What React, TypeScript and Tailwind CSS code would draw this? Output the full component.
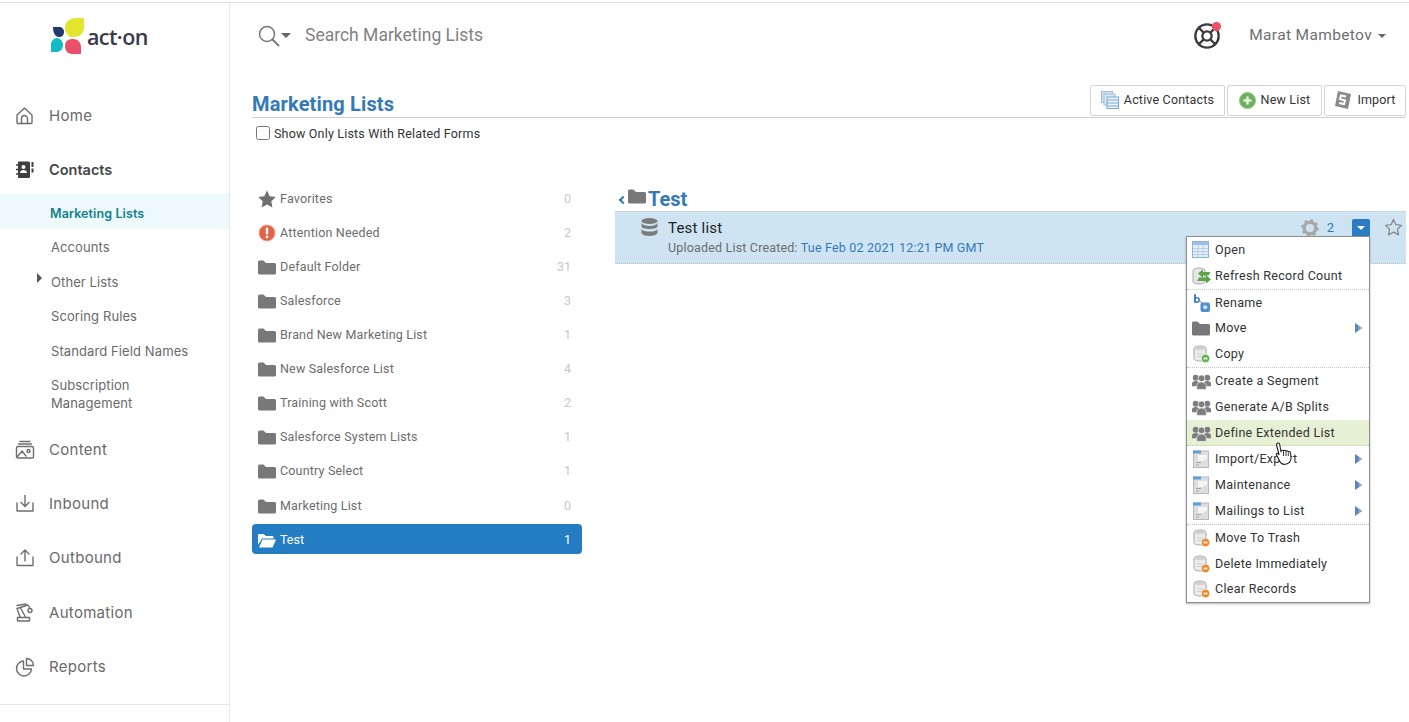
import React from "react";
import { LifeBuoy } from "lucide-react";

const S = (p: { children: React.ReactNode; w?: number; h?: number; vb?: string; className?: string }) => (
  <svg width={p.w ?? 20} height={p.h ?? 20} viewBox={p.vb ?? "0 0 20 20"} className={p.className ?? "shrink-0"} fill="none">
    {p.children}
  </svg>
);
const st = { stroke: "#6e6e6e", strokeWidth: 1.4, strokeLinecap: "round" as const, strokeLinejoin: "round" as const };

const Home = () => (
  <S><path {...st} d="M2 9 9.5 2 17 9v7.5a1 1 0 0 1-1 1H3a1 1 0 0 1-1-1Z" /><path {...st} d="M6.5 17.5v-5a3 3 0 0 1 6 0v5" /></S>
);
const ContactsI = () => (
  <S>
    <path fill="#3f3f3f" d="M3 1.5h10.5a1.5 1.5 0 0 1 1.5 1.5v13.5a1.5 1.5 0 0 1-1.5 1.5H3Z" />
    <path stroke="#3f3f3f" strokeWidth="1.6" d="M1 5h3M1 9.5h3M1 14h3" />
    <path fill="#3f3f3f" d="M16.5 2h2v5h-2zM16.5 8.5h2v4h-2z" />
    <circle cx="8.5" cy="7" r="2" fill="#fff" />
    <path fill="#fff" d="M5 13c0-2 1.500-3 3.500-3s3.500 1 3.500 3Z" />
  </S>
);
const ContentI = () => (
  <S>
    <path {...st} d="M5 1.500h10M3.500 4h13" />
    <rect {...st} x="1.500" y="6.500" width="17" height="11.500" rx="1.500" />
    <path {...st} d="m2 17 5-6 4 5" /><circle {...st} cx="13.500" cy="11" r="1.500" />
  </S>
);
const InboundI = () => (
  <S><path {...st} d="M2 9v8h16V9" /><path {...st} d="M10 1.500V12M6 8.500l4 4 4-4" /></S>
);
const OutboundI = () => (
  <S><path {...st} d="M2 9v8.500h16V9" /><path {...st} d="M10 13V2M6 6l4-4 4 4" /></S>
);
const AutoI = () => (
  <S>
    <path {...st} d="M3 14.500h10M2.500 18h12v-3.500h-12Z" /><path {...st} d="M5 14 2 5.500l11-3.500 1.500 2.500M5.500 5l5 9M2 2.500l9-1.500" />
    <circle {...st} cx="15" cy="7.500" r="2" />
  </S>
);
const ReportsI = () => (
  <S><path {...st} d="M8.500 4a7.500 7.500 0 1 0 8 8h-8Z" /><path {...st} d="M11.500 1.500a7 7 0 0 1 7 7h-7Z" /></S>
);

const Logo = () => (
  <S w={34} h={37} vb="0 0 34 37">
    <path fill="#e3e42c" d="M33 0v9c0 6-4 10-10 10h-3c-3-1-6-4-6-9 0-6 5-10 11-10Z" />
    <path fill="#23386f" d="M2 9h6c3 0 5 2 5 5s-2 5-5 5-6-3-6-10Z" />
    <path fill="#12bcc6" d="M0 34v-8c0-3 3-6 6-6s6 3 6 7-3 7-6 7Z" />
    <path fill="#ea5068" d="M30 36h-9c-4 0-7-3-7-8s3-7 8-7 7 3 8 7Z" />
  </S>
);

const Folder = ({ w = 18, h = 15 }: { w?: number; h?: number }) => (
  <S w={w} h={h} vb="0 0 18 15">
    <path fill="#787878" d="M0 2a1.500 1.500 0 0 1 1.500-1.500h4L8 3h8.500A1.500 1.500 0 0 1 18 4.500V13a1.500 1.500 0 0 1-1.500 1.500h-15A1.500 1.500 0 0 1 0 13Z" />
  </S>
);
const OpenFolder = () => (
  <S w={18} h={15} vb="0 0 18 15">
    <path fill="#fff" d="M0 2a1 1 0 0 1 1-1h4.500L8 3h6.500a1 1 0 0 1 1 1v1.500H4L0 12Z" />
    <path fill="#fff" d="M4.500 6.500H18l-3.500 8H1Z" />
  </S>
);
const StarI = () => (
  <S w={18} h={18} vb="0 0 18 18"><path fill="#6f6f6f" d="m9 .5 2.700 5.700 6.100.8-4.500 4.300 1.100 6.200L9 14.500l-5.400 3 1.100-6.200L.2 7l6.100-.8Z" /></S>
);
const Alert = () => (
  <S w={18} h={18} vb="0 0 18 18">
    <circle cx="9" cy="9" r="8" fill="#e2634a" stroke="#f0a58c" strokeWidth="1" />
    <rect x="7.800" y="3.500" width="2.400" height="7" rx="1" fill="#fff" /><circle cx="9" cy="13" r="1.400" fill="#fff" />
  </S>
);

const Tbl = () => (
  <S w={18} h={18} vb="0 0 18 18">
    <rect x=".5" y=".5" width="16" height="16" fill="#e5eef8" stroke="#8db2dc" />
    <rect x="1" y="1" width="15" height="3" fill="#9cc0e6" />
    <path stroke="#b9d0e8" d="M1 7.500h15M1 10.500h15M1 13.500h15M6 4v12M11 4v12" />
  </S>
);
const Db = ({ badge }: { badge?: string }) => (
  <S w={18} h={18} vb="0 0 18 18">
    <path fill="#ececec" stroke="#a8a8a8" d="M2 3.500C2 2 5 1 8 1s6 1 6 2.500v10C14 15 11 16 8 16s-6-1-6-2.500Z" />
    <ellipse cx="8" cy="3.500" rx="5" ry="1.800" fill="#d2d2d2" />
    <path stroke="#cfcfcf" d="M5 9h6M5 11.500h6" />
    {badge && <circle cx="13.500" cy="13.500" r="4.200" fill={badge} stroke="#fff" strokeWidth=".6" />}
    {badge && <rect x="11.500" y="12.500" width="4" height="2" fill="#fff" opacity=".75" />}
  </S>
);
const Refresh = () => (
  <S w={19} h={18} vb="0 0 19 18">
    <path fill="#e6e6e6" stroke="#a8a8a8" d="M1 3.500C1 2 4 1 7 1s6 1 6 2.500v11C13 16 10 17 7 17s-6-1-6-2.500Z" />
    <path fill="#5aa546" d="M6 6.500 11 2.500v2.500h7.500l-2 3.500H11V11ZM19 12.500 14 16.500V14H5l2-3.500h7V8Z" />
  </S>
);
const RenameI = () => (
  <S w={18} h={18} vb="0 0 18 18">
    <path stroke="#3f7fc6" strokeWidth="2" strokeLinecap="round" d="M3 1v7" /><circle cx="5" cy="6" r="2.200" stroke="#3f7fc6" strokeWidth="1.600" />
    <path stroke="#888" d="m8 7 3 3" />
    <rect x="8.500" y="8.500" width="9.500" height="9.500" rx="2" fill="#4e8fd6" /><circle cx="13.200" cy="13.200" r="2" fill="#d5e6f7" />
  </S>
);
const Group = () => (
  <S w={19} h={17} vb="0 0 18 15">
    <g fill="#7d7d7d">
      <circle cx="3.500" cy="4" r="2.800" /><circle cx="14.500" cy="4" r="2.800" />
      <path d="M0 12V9.500C0 8 1.500 7 3.500 7S7 8 7 9.500V12ZM11 12V9.500C11 8 12.500 7 14.500 7S18 8 18 9.500V12Z" />
      <circle cx="9" cy="4.500" r="3.200" stroke="#fff" strokeWidth=".6" />
      <path stroke="#fff" strokeWidth=".6" d="M4.500 15v-3.500C4.500 9.500 6.500 8 9 8s4.500 1.500 4.500 3.500V15Z" />
    </g>
  </S>
);
const Doc = () => (
  <S w={16} h={18} vb="0 0 16 18">
    <rect x=".5" y="1" width="15" height="16.500" fill="#dedede" stroke="#b8b8b8" />
    <rect x="0" y=".5" width="8" height="3" fill="#5aa0e0" />
    <path stroke="#a5a5a5" d="M3 12.500h5M3 15h3" /><path fill="#fff" d="M5 5h9v3l-4 3H5Z" opacity=".7" />
  </S>
);
const Tri = () => (
  <svg width="7" height="10" viewBox="0 0 7 10" className="absolute right-[7px] top-1/2 -translate-y-1/2">
    <path fill="#5b86b8" d="M0 0l7 5-7 5Z" /><path fill="#8aa6c8" d="M3.500 2.500 7 5l-3.500 2.500Z" />
  </svg>
);

const subRows: { label: string; active?: boolean; caret?: boolean; h: number; two?: boolean }[] = [
  { label: "Marketing Lists", active: true, h: 35 },
  { label: "Accounts", h: 34 },
  { label: "Other Lists", caret: true, h: 35 },
  { label: "Scoring Rules", h: 34 },
  { label: "Standard Field Names", h: 35 },
  { label: "Subscription Management", h: 52, two: true },
];

const NavItem = ({ icon, label, bold, mt }: { icon: React.ReactNode; label: string; bold?: boolean; mt?: string }) => (
  <div className={`flex h-[54px] items-center pl-[15px] gap-[14px] ${mt ?? ""}`}>
    {icon}
    <span className={bold ? "text-[14.5px] font-semibold text-[#454545]" : "text-[15px] text-[#6a6a6a] tracking-[.3px]"}>{label}</span>
  </div>
);

const Sidebar = () => (
  <aside className="w-[230px] shrink-0 border-r border-[#e4e8ec] flex flex-col font-['Inter',sans-serif]">
    <div className="h-[86px] flex items-start pl-[51px] pt-[15px] gap-[2px]">
      <Logo />
      <span className="font-['Open_Sans',sans-serif] font-semibold text-[21.5px] leading-[38px] tracking-[-.6px] text-[#3b3a48]">act·on</span>
    </div>
    <NavItem icon={<Home />} label="Home" />
    <NavItem icon={<ContactsI />} label="Contacts" bold />
    <div className="-mt-[3px] flex flex-col">
      {subRows.map((r) => (
        <div
          key={r.label}
          style={{ height: r.h }}
          className={`relative flex items-center ${r.active ? "pt-[4px] bg-[#eef9fb] pl-[50px] text-[12.5px] tracking-[.1px] font-semibold text-[#11808a]" : "pt-[2px] pl-[51px] text-[13px] tracking-[.1px] text-[#6a6a6a]"} ${r.two ? "pr-[60px]" : ""} leading-[18px]`}
        >
          {r.caret && <span className="absolute left-[37px] top-[10px] w-0 h-0 border-y-[5px] border-y-transparent border-l-[5px] border-l-[#555]" />}
          {r.label}
        </div>
      ))}
    </div>
    <div className="mt-[4px]">
      <NavItem icon={<ContentI />} label="Content" />
      <NavItem icon={<InboundI />} label="Inbound" />
      <NavItem icon={<OutboundI />} label="Outbound" />
      <NavItem icon={<AutoI />} label="Automation" mt="mt-[1px]" />
      <NavItem icon={<ReportsI />} label="Reports" />
    </div>
    <div className="mt-[10px] border-t border-[#e4e8ec]" />
  </aside>
);

const Btn = ({ icon, label, w }: { icon: React.ReactNode; label: string; w: string }) => (
  <div className={`${w} h-[31px] pb-[1px] border border-[#d4d4d4] rounded-[2px] flex items-center justify-center gap-[5px] text-[12.5px] tracking-[.18px] text-[#333] bg-white`}>
    {icon}
    <span>{label}</span>
  </div>
);

const folders: { n: string; c: string; icon: React.ReactNode; mt?: string }[] = [
  { n: "Favorites", c: "0", icon: <StarI /> },
  { n: "Attention Needed", c: "2", icon: <Alert /> },
  { n: "Default Folder", c: "31", icon: <Folder /> },
  { n: "Salesforce", c: "3", icon: <Folder /> },
  { n: "Brand New Marketing List", c: "1", icon: <Folder /> },
  { n: "New Salesforce List", c: "4", icon: <Folder /> },
  { n: "Training with Scott", c: "2", icon: <Folder /> },
  { n: "Salesforce System Lists", c: "1", icon: <Folder /> },
  { n: "Country Select", c: "1", icon: <Folder /> },
  { n: "Marketing List", c: "0", icon: <Folder />, mt: "mt-[1px]" },
];

type MI = { l: string; i: React.ReactNode; sub?: boolean; sep?: boolean; hover?: boolean; h?: string };
const menu: MI[] = [
  { l: "Open", i: <Tbl /> },
  { l: "Refresh Record Count", i: <Refresh />, sep: true },
  { l: "Rename", i: <RenameI />, h: "h-[25px] pt-[1px]" },
  { l: "Move", i: <Folder />, sub: true },
  { l: "Copy", i: <Db badge="#62b04c" />, sep: true },
  { l: "Create a Segment", i: <Group /> },
  { l: "Generate A/B Splits", i: <Group /> },
  { l: "Define Extended List", i: <Group />, hover: true },
  { l: "Import/Export", i: <Doc />, sub: true },
  { l: "Maintenance", i: <Doc />, sub: true },
  { l: "Mailings to List", i: <Doc />, sub: true, sep: true },
  { l: "Move To Trash", i: <Db badge="#e8872c" /> },
  { l: "Delete Immediately", i: <Db badge="#e8872c" />, h: "h-[25px] pt-[1px]" },
  { l: "Clear Records", i: <Db badge="#e8872c" /> },
];

const Menu = () => (
  <div className="absolute left-[571px] top-[24px] w-[184px] bg-white border border-[#8f8f8f] shadow-[0_1px_2px_rgba(0,0,0,.3)] z-10">
    {menu.map((m) => (
      <div
        key={m.l}
        className={`relative ${m.h ?? (m.sep ? "h-[27px]" : "h-[26px]")} flex items-center pl-[5px] gap-[5px] text-[12.5px] tracking-[.3px] text-[#333] ${m.hover ? "pt-[1px] bg-[#e6f0d5] border-b border-dotted border-[#bcd0a0]" : ""} ${m.sep ? "border-b border-dotted border-[#c4c4c4]" : ""}`}
      >
        <span className="w-[18px] flex justify-center shrink-0">{m.i}</span>
        <span>{m.l}</span>
        {m.sub && <Tri />}
      </div>
    ))}
    <svg width="18" height="24" viewBox="0 0 18 24" className="absolute left-[88px] top-[205px]">
      <path fill="#fff" stroke="#222" strokeWidth="1.100" strokeLinejoin="round" d="M2 1.500c1-1 2.500-.5 2.700 1L6 10V9c.5-1 2-1 2.500 0 .5-1 2-1 2.500.2.700-.7 2-.5 2.300.6.700-.5 2-.2 2.200 1l.5 5c0 3-2 6-5.500 6.500-3 .3-5-1-6-3.500L1.500 13c-.5-1 .2-2 1.500-1.500l1 1L1.500 3Z" />
      <path stroke="#222" strokeWidth=".9" d="M8.500 9.500V14M11 9.500V14M13.300 10.500V14" />
    </svg>
  </div>
);

export default function App() {
  return (
    <div className="w-[1409px] h-[722px] overflow-hidden bg-white pt-[2px] font-['Roboto',sans-serif]">
      <div className="h-[720px] border-t border-[#d8e1ea] flex">
        <Sidebar />
        <main className="flex-1 flex flex-col pl-[22px] pr-[3px]">
          <div className="h-[64px] pt-[1px] flex items-center justify-between shrink-0">
            <div className="flex items-center pl-[6px]">
              <svg width="22" height="22" viewBox="0 0 22 22" fill="none" className="shrink-0">
                <circle cx="9" cy="9" r="7.500" stroke="#777" strokeWidth="1.500" />
                <path stroke="#777" strokeWidth="1.800" strokeLinecap="round" d="m14.500 14.500 6 6" />
              </svg>
              <span className="ml-[1px] w-0 h-0 border-x-[5px] border-x-transparent border-t-[5px] border-t-[#666]" />
              <span className="ml-[14px] text-[17.5px] text-[#828282]">Search Marketing Lists</span>
            </div>
            <div className="flex items-center pr-[20px]">
              <span className="relative mr-[28px] flex">
                <LifeBuoy size={28} strokeWidth={2} color="#3c3c3c" />
                <span className="absolute right-0 top-0 w-[9px] h-[9px] rounded-full bg-[#ea5068]" />
              </span>
              <span className="text-[15.5px] text-[#6f6f6f] tracking-[.35px]">Marat Mambetov</span>
              <span className="ml-[6px] w-0 h-0 border-x-[4px] border-x-transparent border-t-[4px] border-t-[#666]" />
            </div>
          </div>

          <div className="h-[51px] border-b border-[#cfcfcf] flex items-end justify-between shrink-0 pb-[1px]">
            <h1 className="text-[20px] font-bold leading-[26px] tracking-[.15px] text-[#337ab7] -mb-[1px]">Marketing Lists</h1>
            <div className="flex gap-[2px]">
              <Btn
                w="w-[135px]"
                label="Active Contacts"
                icon={
                  <S w={18} h={18} vb="0 0 18 18">
                    <rect x=".5" y=".5" width="11" height="11" fill="#cfe0f3" stroke="#9dbde0" />
                    <rect x="3" y="3" width="11" height="11" fill="#dbe8f6" stroke="#9dbde0" />
                    <rect x="6" y="6" width="11.500" height="11.500" fill="#eef4fb" stroke="#7ba6d6" />
                    <path stroke="#7ba6d6" d="M6 9h11.500M6 12h11.500M6 15h11.500" />
                  </S>
                }
              />
              <Btn
                w="w-[95px]"
                label="New List"
                icon={
                  <S w={17} h={17} vb="0 0 17 17">
                    <circle cx="8.500" cy="8.500" r="8" fill="#6db25a" stroke="#8fc77f" />
                    <path stroke="#e8f3e4" strokeWidth="2.400" d="M8.500 4.500v8M4.500 8.500h8" />
                  </S>
                }
              />
              <Btn
                w="w-[82px]"
                label="Import"
                icon={
                  <S w={18} h={18} vb="0 0 18 18">
                    <path fill="#8a8a8a" d="M4 0 17 3l-3 15L1 15Z" />
                    <path stroke="#fff" strokeWidth="2" fill="none" d="M12 5.500 7 4.500 6 8l5 1.500-1 3.500-5-1" />
                  </S>
                }
              />
            </div>
          </div>

          <label className="mt-[8px] ml-[4px] h-[15px] flex items-center gap-[4px] text-[12.5px] tracking-[.18px] text-[#333] shrink-0">
            <span className="w-[14px] h-[14px] -mt-[2px] border border-[#767676] rounded-[2.500px] bg-white" />
            <span className="mt-[2px]">Show Only Lists With Related Forms</span>
          </label>

          <div className="mt-[41px] flex gap-[33px] items-start">
            <ul className="w-[330px] shrink-0">
              {folders.map((f) => (
                <li key={f.n} className={`h-[34px] ${f.mt ?? ""} flex items-center pl-[6px] pr-[11px] gap-[4px] text-[12.5px] text-[#6c6c6c]`}>
                  <span className="w-[18px] flex justify-center shrink-0">{f.icon}</span>
                  <span className="flex-1 tracking-[.18px]">{f.n}</span>
                  <span className="text-[#c8c8c8]">{f.c}</span>
                </li>
              ))}
              <li className="h-[30px] mt-[1px] pt-[2px] flex items-center pl-[6px] pr-[11px] gap-[4px] text-[12.5px] text-white bg-[#247dc3] rounded-[4px]">
                <span className="w-[18px] flex justify-center shrink-0"><OpenFolder /></span>
                <span className="flex-1">Test</span>
                <span>1</span>
              </li>
            </ul>

            <section className="flex-1 mt-[4px]">
              <div className="h-[25px] flex items-center pl-[3px]">
                <span className="w-[6px] h-[6px] border-l-[2px] border-b-[2px] border-[#337ab7] rotate-45 ml-[2px] mt-[3px]" />
                <span className="ml-[2px] -mt-[5px]"><Folder w={18} h={15} /></span>
                <span className="ml-[2px] text-[20px] font-bold text-[#337ab7]">Test</span>
              </div>
              <div className="relative h-[53px] bg-[#cfe4f3] border-t border-[#c4ccd2] border-b border-dotted border-b-[#b9c6cf] flex items-start pt-[6px] pl-[26px]">
                <svg width="18" height="18" viewBox="0 0 18 18" className="shrink-0 mr-[9px]">
                  <g fill="#7a7a7a">
                    <ellipse cx="8.500" cy="3" rx="8" ry="3" />
                    <path d="M.5 5c1 2 4 3 8 3s7-1 8-3v3.500c-1 1.800-4 2.500-8 2.500s-7-.7-8-2.500Z" />
                    <path d="M.5 11c1 2 4 2.500 8 2.500s7-.5 8-2.500v4c-1 2-4 3-8 3s-7-1-8-3Z" />
                  </g>
                </svg>
                <div className="flex-1">
                  <div className="text-[15px] leading-[20px] text-[#222] tracking-[.2px]">Test list</div>
                  <div className="text-[12.5px] leading-[19px] text-[#6c6c6c] tracking-[.18px]">
                    Uploaded List Created: <span className="text-[#337ab7]">Tue Feb 02 2021 12:21 PM GMT</span>
                  </div>
                </div>
                <div className="flex items-center pr-[3px]">
                  <svg width="18" height="18" viewBox="0 0 18 18" className="mr-[8px] mt-[1px]">
                    <circle cx="9" cy="9" r="5.800" fill="none" stroke="#a8a8a8" strokeWidth="3.400" />
                    <circle cx="9" cy="9" r="7.700" fill="none" stroke="#a8a8a8" strokeWidth="2.200" strokeDasharray="2.700 3.350" />
                  </svg>
                  <span className="text-[13px] text-[#337ab7] mr-[18px]">2</span>
                  <span className="w-[18px] h-[18px] bg-[#2a7cc3] rounded-[2px] flex items-center justify-center">
                    <span className="w-0 h-0 border-x-[4px] border-x-transparent border-t-[4px] border-t-white" />
                  </span>
                  <svg width="19" height="19" viewBox="0 0 19 19" className="ml-[14px]">
                    <path fill="none" stroke="#8a8a8a" strokeWidth="1.300" strokeLinejoin="round" d="m9.500 1.500 2.400 5.200 5.600.7-4.100 3.900 1.100 5.600-5-2.800-5 2.800 1.100-5.600L1.500 7.400l5.600-.7Z" />
                  </svg>
                </div>
                <Menu />
              </div>
            </section>
          </div>
        </main>
      </div>
    </div>
  );
}
